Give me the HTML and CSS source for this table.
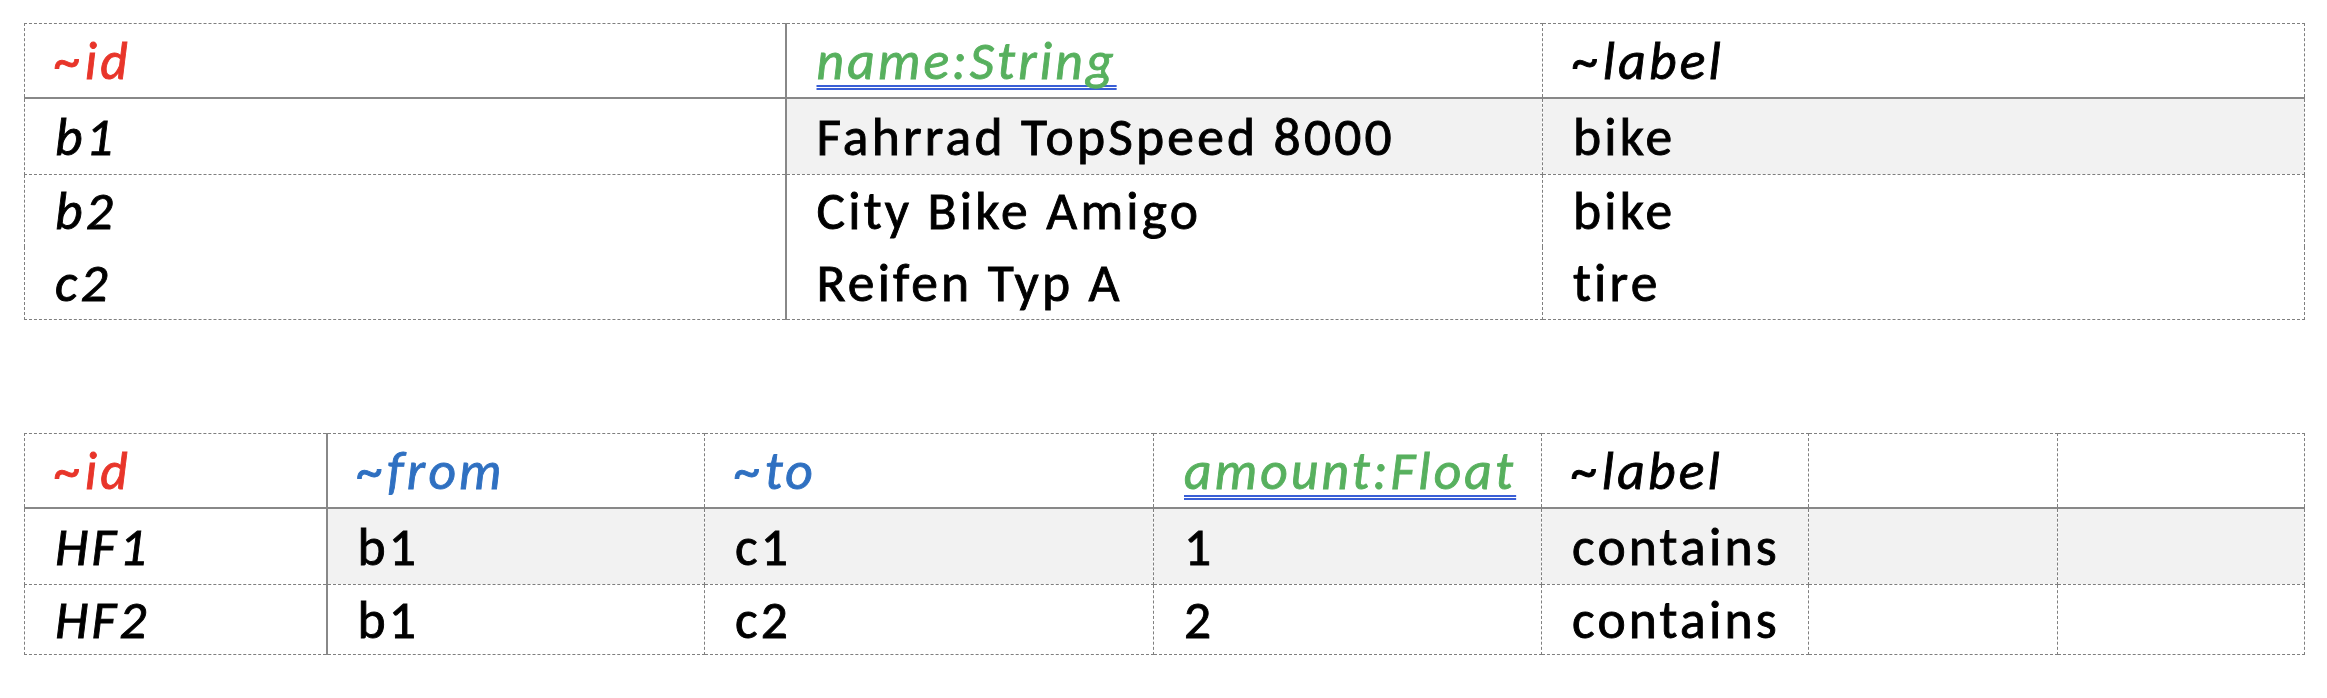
FILE: index.html
```html
<!DOCTYPE html>
<html lang="de">
<head>
<meta charset="utf-8">
<title>Tabellen</title>
<link rel="stylesheet" href="styles.css">
</head>
<body>
<table class="grid nodes">
  <colgroup><col class="n1"><col class="n2"><col class="n3"></colgroup>
  <thead>
    <tr class="head">
      <th class="key sys-id">~id</th>
      <th><span class="prop">name:String</span></th>
      <th class="key">~label</th>
    </tr>
  </thead>
  <tbody>
    <tr class="row-a">
      <td class="key">b1</td>
      <td class="shade">Fahrrad TopSpeed 8000</td>
      <td class="shade">bike</td>
    </tr>
    <tr class="row-b">
      <td class="key">b2</td>
      <td>City Bike Amigo</td>
      <td>bike</td>
    </tr>
    <tr class="row-b joined">
      <td class="key">c2</td>
      <td>Reifen Typ A</td>
      <td>tire</td>
    </tr>
  </tbody>
</table>

<table class="grid edges">
  <colgroup><col class="e1"><col class="e2"><col class="e3"><col class="e4"><col class="e5"><col class="e6"><col class="e7"></colgroup>
  <thead>
    <tr class="head">
      <th class="key sys-id">~id</th>
      <th class="key sys-ref">~from</th>
      <th class="key sys-ref">~to</th>
      <th><span class="prop">amount:Float</span></th>
      <th class="key">~label</th>
      <th></th>
      <th></th>
    </tr>
  </thead>
  <tbody>
    <tr class="row-a">
      <td class="key">HF1</td>
      <td class="shade">b1</td>
      <td class="shade">c1</td>
      <td class="shade">1</td>
      <td class="shade">contains</td>
      <td class="shade"></td>
      <td class="shade"></td>
    </tr>
    <tr class="row-c">
      <td class="key">HF2</td>
      <td>b1</td>
      <td>c2</td>
      <td>2</td>
      <td>contains</td>
      <td></td>
      <td></td>
    </tr>
  </tbody>
</table>
</body>
</html>
```

FILE: styles.css
```css
html, body {
  margin: 0;
  background: #ffffff;
}

body {
  padding: 23px 23px 0 24px;
  font-family: Carlito, Lato, sans-serif;
  font-size: 53.5px;
  letter-spacing: 3.2px;
  -webkit-text-stroke: 0.9px currentColor;
  color: #000000;
}

.grid {
  border-collapse: collapse;
  table-layout: fixed;
  width: 2280px;
  border: 1px dashed #7f7f7f;
}

.grid td,
.grid th {
  border: 1px dashed #7f7f7f;
  padding: 0 0 0 30px;
  text-align: left;
  font-weight: normal;
  vertical-align: top;
  white-space: nowrap;
  overflow: hidden;
}

.grid thead th {
  border-bottom: 2px solid #888888;
}

.grid td:first-child,
.grid th:first-child {
  border-right: 2px solid #888888;
}

.key {
  font-style: italic;
}

.sys-id {
  color: #e8352a;
}

.sys-ref {
  color: #2f70c1;
}

.prop {
  font-style: italic;
  color: #57b05e;
  text-decoration: underline double #3a5fd6;
  text-decoration-thickness: 1.8px;
  text-underline-offset: 6px;
  text-decoration-skip-ink: none;
}

.shade {
  background: #f2f2f2;
}

.head th {
  height: 73px;
  line-height: 73px;
}

.row-a td {
  height: 75px;
  line-height: 75px;
}

.row-b td {
  height: 72px;
  line-height: 72px;
}

.row-c td {
  height: 69px;
  line-height: 69px;
}

.joined td {
  border-top: hidden;
}

.edges {
  margin-top: 113px;
}

.n1 { width: 761px; }
.n2 { width: 757px; }
.n3 { width: 762px; }

.e1 { width: 302px; }
.e2 { width: 378px; }
.e3 { width: 449px; }
.e4 { width: 388px; }
.e5 { width: 267px; }
.e6 { width: 249px; }
.e7 { width: 247px; }
```
